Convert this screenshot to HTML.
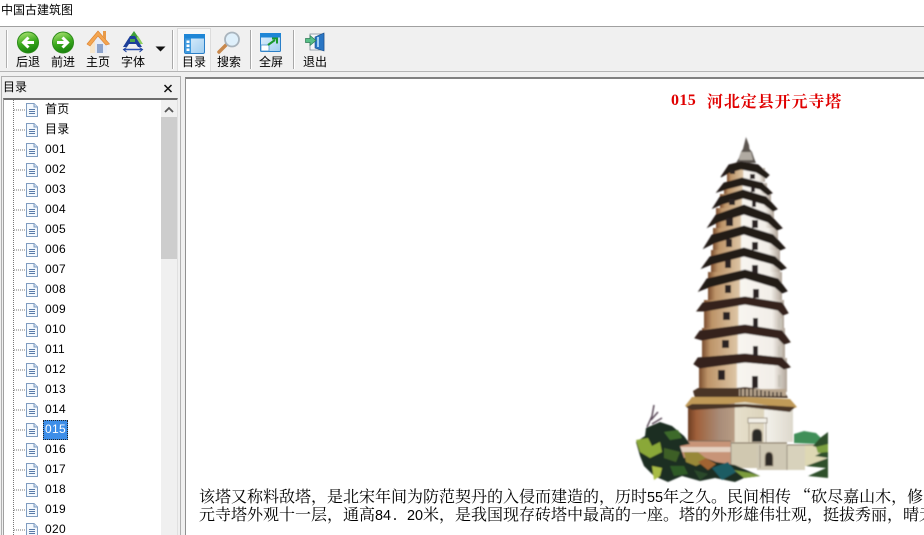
<!DOCTYPE html>
<html><head><meta charset="utf-8">
<style>
html,body{margin:0;padding:0;width:924px;height:535px;overflow:hidden;background:#f0f0f0}
body{position:relative;font-family:"Liberation Sans","Noto Sans CJK SC",sans-serif;font-size:12px;color:#000}
div{position:absolute;white-space:nowrap}
.lb{top:55px;width:40px;text-align:center;line-height:14px;font-size:12px}
.sep{top:30px;width:1px;height:39px;background:#a8a8a8;border-right:1px solid #fff}
.it{left:45px;line-height:16px;font-size:12px;letter-spacing:.3px}
.body{left:199px;font-family:"Noto Serif CJK SC",serif;font-size:16px;line-height:18px;color:#000}
.body i{font-style:normal;font-family:"Liberation Sans",sans-serif;font-size:14.4px}
.body b{font-weight:normal;font-family:"Liberation Mono",monospace;font-size:13.33px}
svg{position:absolute;left:0;top:0}
</style></head><body>
<div style="left:0;top:0;width:924px;height:26px;background:#fff"></div>
<div style="left:1px;top:3px;line-height:14px">中国古建筑图</div>
<div style="left:0;top:26px;width:924px;height:1px;background:#a0a0a0"></div>
<div style="left:0;top:71px;width:924px;height:1px;background:#b4b4b4"></div>
<div style="left:177px;top:28px;width:34px;height:43px;background:#f8f8f8;border:1px solid #dcdcdc;border-bottom:0;box-sizing:border-box"></div>
<div style="left:6px;top:30px;width:1px;height:38px;background:#b0b0b0;border-right:1px solid #fff"></div>
<div class="sep" style="left:172px"></div>
<div class="sep" style="left:250px"></div>
<div class="sep" style="left:293px"></div>
<div class="lb" style="left:8px">后退</div>
<div class="lb" style="left:43px">前进</div>
<div class="lb" style="left:78px">主页</div>
<div class="lb" style="left:113px">字体</div>
<div class="lb" style="left:174px">目录</div>
<div class="lb" style="left:209px">搜索</div>
<div class="lb" style="left:251px">全屏</div>
<div class="lb" style="left:295px">退出</div>

<!-- left pane -->
<div style="left:1px;top:76px;width:180px;height:459px;border:1px solid #b0b0b0;border-bottom:0;box-sizing:border-box"></div>
<div style="left:3px;top:80px;line-height:14px">目录</div>
<div style="left:3px;top:98px;width:175px;height:437px;background:#fff;border-top:2px solid #6d6d6d;border-left:1px solid #a0a0a0;border-right:1px solid #e0e0e0;box-sizing:border-box"></div>
<div style="left:161px;top:100px;width:16px;height:435px;background:#f0f0f0"></div>
<div style="left:161px;top:117px;width:16px;height:142px;background:#cdcdcd"></div>
<div style="left:185px;top:77px;width:739px;height:458px;background:#fff;border-top:2px solid #808080;border-left:1px solid #909090;box-sizing:border-box"></div>

<div class="it" style="top:101px">首页</div><div class="it" style="top:121px">目录</div>
<div class="it" style="top:141px">001</div><div class="it" style="top:161px">002</div>
<div class="it" style="top:181px">003</div><div class="it" style="top:201px">004</div>
<div class="it" style="top:221px">005</div><div class="it" style="top:241px">006</div>
<div class="it" style="top:261px">007</div><div class="it" style="top:281px">008</div>
<div class="it" style="top:301px">009</div><div class="it" style="top:321px">010</div>
<div class="it" style="top:341px">011</div><div class="it" style="top:361px">012</div>
<div class="it" style="top:381px">013</div><div class="it" style="top:401px">014</div>
<div class="it" style="top:420px;left:43px;width:25px;height:20px;background:#3d8ee8;outline:1px dotted #222;outline-offset:-1px;color:#fff;text-indent:2px;line-height:19px">015</div>
<div class="it" style="top:441px">016</div><div class="it" style="top:461px">017</div>
<div class="it" style="top:481px">018</div><div class="it" style="top:501px">019</div>
<div class="it" style="top:521px">020</div>

<!-- content -->
<div style="left:671px;top:92px;width:30px;font-family:'Liberation Serif',serif;font-size:16px;font-weight:bold;color:#e00000;line-height:18px;letter-spacing:.4px">015</div>
<div style="left:707px;top:92px;font-family:'Noto Serif CJK SC',serif;font-size:16px;font-weight:bold;color:#e00000;line-height:18px;letter-spacing:.9px">河北定县开元寺塔</div>
<div class="body" style="top:487px">该塔又称料敌塔，是北宋年间为防范契丹的入侵而建造的，历时<i>55</i>年之久。民间相传 “砍尽嘉山木，修</div>
<div class="body" style="top:505px">元寺塔外观十一层，通高<i>84</i><b>. </b><i>20</i>米，是我国现存砖塔中最高的一座。塔的外形雄伟壮观，挺拔秀丽，晴天</div>

<svg width="924" height="535" viewBox="0 0 924 535">
<defs>
<linearGradient id="g1" x1=".3" y1="0" x2=".6" y2="1"><stop offset="0" stop-color="#a8e070"/><stop offset=".5" stop-color="#3cab1e"/><stop offset="1" stop-color="#17800c"/></linearGradient>
<linearGradient id="pw" x1="0" y1="0" x2="1" y2="0"><stop offset="0" stop-color="#7a4c2e"/><stop offset=".1" stop-color="#bd9468"/><stop offset=".42" stop-color="#dcc4a4"/><stop offset=".44" stop-color="#f8f5f0"/><stop offset=".85" stop-color="#f2eee8"/><stop offset="1" stop-color="#b0a498"/></linearGradient>
<linearGradient id="pb" x1="0" y1="0" x2="1" y2="0"><stop offset="0" stop-color="#6b3d22"/><stop offset=".08" stop-color="#a0603a"/><stop offset=".3" stop-color="#a88c78"/><stop offset=".44" stop-color="#b89c84"/><stop offset=".45" stop-color="#e6e0cc"/><stop offset=".72" stop-color="#ddd4bc"/><stop offset=".73" stop-color="#f4f2ec"/><stop offset="1" stop-color="#ddd8cc"/></linearGradient>
<linearGradient id="win" x1="0" y1="0" x2="1" y2="1"><stop offset="0" stop-color="#e4f2fd"/><stop offset="1" stop-color="#9fcdf0"/></linearGradient>
<symbol id="doc" viewBox="0 0 12 14"><path d="M.5.5H8L11.5 4V13.5H.5Z" fill="#f3f8fd" stroke="#7f9cc0"/><path d="M8 .5V4H11.5" fill="#cfe0f2" stroke="#7f9cc0"/><path d="M3 6.5H9M3 8.5H9M3 10.5H9" stroke="#587aa8"/></symbol>
<filter id="soft" x="-5%" y="-5%" width="110%" height="110%"><feGaussianBlur stdDeviation=".8"/></filter>
</defs>

<!-- close & scroll arrow -->
<path d="M164.5 85L171.5 92M171.5 85L164.5 92" stroke="#111" stroke-width="1.5"/>
<path d="M165 112L169 108L173 112" fill="none" stroke="#555" stroke-width="1.8"/>

<!-- tree dotted -->
<path d="M13.5 100V535" stroke="#777" stroke-dasharray="1 1" fill="none"/>
<path d="M14 110H26M14 130H26M14 150H26M14 170H26M14 190H26M14 210H26M14 230H26M14 250H26M14 270H26M14 290H26M14 310H26M14 330H26M14 350H26M14 370H26M14 390H26M14 410H26M14 430H26M14 450H26M14 470H26M14 490H26M14 510H26M14 530H26" stroke="#777" stroke-dasharray="1 1" fill="none"/>
<use href="#doc" x="26" y="103" width="12" height="14"/><use href="#doc" x="26" y="123" width="12" height="14"/>
<use href="#doc" x="26" y="143" width="12" height="14"/><use href="#doc" x="26" y="163" width="12" height="14"/>
<use href="#doc" x="26" y="183" width="12" height="14"/><use href="#doc" x="26" y="203" width="12" height="14"/>
<use href="#doc" x="26" y="223" width="12" height="14"/><use href="#doc" x="26" y="243" width="12" height="14"/>
<use href="#doc" x="26" y="263" width="12" height="14"/><use href="#doc" x="26" y="283" width="12" height="14"/>
<use href="#doc" x="26" y="303" width="12" height="14"/><use href="#doc" x="26" y="323" width="12" height="14"/>
<use href="#doc" x="26" y="343" width="12" height="14"/><use href="#doc" x="26" y="363" width="12" height="14"/>
<use href="#doc" x="26" y="383" width="12" height="14"/><use href="#doc" x="26" y="403" width="12" height="14"/>
<use href="#doc" x="26" y="423" width="12" height="14"/><use href="#doc" x="26" y="443" width="12" height="14"/>
<use href="#doc" x="26" y="463" width="12" height="14"/><use href="#doc" x="26" y="483" width="12" height="14"/>
<use href="#doc" x="26" y="503" width="12" height="14"/><use href="#doc" x="26" y="523" width="12" height="14"/>

<!-- back -->
<circle cx="28" cy="42.5" r="10.5" fill="url(#g1)" stroke="#2a8a18"/>
<path d="M34 42.5H24M28.5 37.5L23.5 42.5L28.5 47.5" fill="none" stroke="#fff" stroke-width="3"/>
<!-- forward -->
<circle cx="63" cy="42.5" r="10.5" fill="url(#g1)" stroke="#2a8a18"/>
<path d="M57 42.5H67M62.5 37.5L67.5 42.5L62.5 47.5" fill="none" stroke="#fff" stroke-width="3"/>
<!-- home -->
<path d="M90 41L98 35L107 41V53H90Z" fill="#e6ebf5"/>
<path d="M90 41H95V53H90Z" fill="#f6e6cc"/>
<path d="M97 44H103V53H97Z" fill="#8ca3cb"/>
<path d="M87 44L98 31L109.5 44L106 45L98 36L90 46Z" fill="#f4a650" stroke="#dc8030" stroke-width=".6"/>
<path d="M103 31H106V40L103 36Z" fill="#e89a48"/>
<!-- font -->
<path d="M134 31L141 41H127Z" fill="#3f9f3a"/><path d="M138 36L143 44H133Z" fill="#8ccf5e"/>
<path d="M123 47L130 36H135L142 47H138L136 44H129L127 47Z" fill="#1c3f9a"/>
<rect x="130" y="39" width="5" height="3" fill="#4aa54a"/>
<path d="M124 49.5H142" stroke="#2b4fb0" stroke-width="1.6"/><path d="M126.5 47.5L123.5 49.5L126.5 52M139.5 47.5L142.5 49.5L139.5 52" fill="none" stroke="#1c3f9a"/>
<!-- dropdown -->
<path d="M155.5 46.5H165.5L160.5 51.5Z" fill="#111"/>
<!-- catalog -->
<rect x="184.5" y="34.5" width="20" height="19" rx="1.5" fill="url(#win)" stroke="#2a7fc8"/>
<rect x="184" y="34" width="21" height="4.5" fill="#1f86d6"/>
<path d="M185 38.5H191V53H185Z" fill="#3f9ade"/>
<path d="M186.5 40.5H189.5V43H186.5ZM186.5 44.5H189.5V47H186.5ZM186.5 48.5H189.5V51H186.5Z" fill="#fff"/>
<!-- search -->
<path d="M219 52L226 45" stroke="#c8884c" stroke-width="3.5" stroke-linecap="round"/>
<circle cx="232" cy="39.5" r="7" fill="#dff0fb" stroke="#a9b4bd" stroke-width="1.8"/>
<!-- fullscreen -->
<rect x="260.5" y="33.5" width="20" height="18" rx="1" fill="url(#win)" stroke="#2a7fc8"/>
<rect x="260" y="33" width="21" height="4.5" fill="#1f86d6"/>
<rect x="261" y="45" width="8" height="6" fill="#fff" stroke="#4a94cf" stroke-width=".8"/>
<path d="M268 45L275 40M272 38.5H277V43.5" fill="none" stroke="#1a9a2e" stroke-width="2"/>
<!-- exit -->
<path d="M310 34H324V50H310Z" fill="#f4f6f8" stroke="#7c8a98" stroke-width=".8"/>
<path d="M315 37L324 33V51L315 48Z" fill="#2a76c4" stroke="#174a86" stroke-width=".6"/>
<path d="M318 37V47" stroke="#a0cdf2" stroke-width="2"/>
<path d="M305.5 38.5H310V35.5L316 40.5L310 45.5V42.5H305.5Z" fill="#58bf86" stroke="#2c7a55" stroke-width=".7"/>

<!-- pagoda -->
<g filter="url(#soft)">
<!-- finial -->
<path d="M746 137L747.5 141L749 145L749.5 149L752 152L754 158L756 163H736L739 158L741 152L743 149L744 145Z" fill="#5b5450"/>
<path d="M741 152H751L753 160H739Z" fill="#b0aaa2"/>
<!-- walls -->
<path d="M727 168H765V182H727Z" fill="url(#pw)"/>
<path d="M724 183H767V194H724Z" fill="url(#pw)"/>
<path d="M720 194H771V210H720Z" fill="url(#pw)"/>
<path d="M716 208H774V230H716Z" fill="url(#pw)"/>
<path d="M713 228H778V252H713Z" fill="url(#pw)"/>
<path d="M711 250H780V274H711Z" fill="url(#pw)"/>
<path d="M708 272H782V300H708Z" fill="url(#pw)"/>
<path d="M704 300H784V328H704Z" fill="url(#pw)"/>
<path d="M702 328H785V358H702Z" fill="url(#pw)"/>
<path d="M699 358H787V392H699Z" fill="url(#pw)"/>
<path d="M688 402H793V442H688Z" fill="url(#pb)"/>
<!-- roofs -->
<path d="M721 177L729 165L741 162L758 165L769 175L766 178L756 172L741 169L730 172Z" fill="#241a18" stroke="#241a18"/>
<path d="M717 192L724 183L742 178L762 183L772 193L768 195L760 189L742 185L726 189Z" fill="#241a18" stroke="#241a18"/>
<path d="M713 208L720 197L743 190L766 197L777 209L773 211L764 204L743 198L722 204Z" fill="#241a18" stroke="#241a18"/>
<path d="M708 227L716 215L744 205L770 215L782 228L777 230L768 222L744 214L718 222Z" fill="#241a18" stroke="#241a18"/>
<path d="M704 248L712 235L744 226L773 235L785 248L780 250L771 243L744 234L714 243Z" fill="#241a18" stroke="#241a18"/>
<path d="M702 268L710 257L744 248L775 257L786 268L781 270L773 264L744 256L712 264Z" fill="#241a18" stroke="#241a18"/>
<path d="M699 291L707 279L745 270L778 279L787 291L782 293L775 287L745 278L709 287Z" fill="#241a18" stroke="#241a18"/>
<path d="M697 311L703 303L745 297L782 303L788 313L783 315L778 310L745 304L705 311Z" fill="#35241c" stroke="#35241c"/>
<path d="M695 338L700 331L745 325L782 331L790 342L784 344L778 338L745 333L702 340Z" fill="#35241c" stroke="#35241c"/>
<path d="M694 364L698 358L745 354L782 358L790 367L784 369L778 365L745 362L700 368Z" fill="#35241c" stroke="#35241c"/>
<!-- balcony -->
<path d="M693 391L698 388H736L745 387L785 392L788 398L745 397L695 398Z" fill="#4a3428"/>
<path d="M739 389H786V396H739Z" fill="#b8a58e"/>
<path d="M741 389V396M745 389V396M749 389V396M753 389V396M757 390V396M761 390V396M765 391V396M769 391V396M773 392V396M777 392V396M781 392V396" stroke="#332822" stroke-width="1.4"/>
<path d="M685 406L692 397H745L790 399L797 407L792 409L745 402L690 408Z" fill="#c09a58"/>
<path d="M686 407L692 404H745L795 407L790 412L745 407L692 410Z" fill="#4a3428"/>
<!-- windows -->
<path d="M730 170h5v4h-5ZM750 174h5v5h-5ZM751 187h4v5h-4ZM729 199h6v6h-6ZM752 201h4v6h-4ZM726 218h7v8h-7ZM752 220h6v8h-6ZM726 239h6v8h-6ZM752 242h6v8h-6ZM725 260h6v8h-6ZM752 265h6v8h-6ZM725 285h6v8h-6ZM753 289h6v9h-6ZM723 312h7v8h-7ZM753 318h5v10h-5ZM722 340h7v8h-7ZM753 346h5v10h-5ZM718 370h7v10h-7ZM752 376h6v12h-6Z" fill="#2a2420"/>
<path d="M778 318h4v10h-4ZM778 346h4v10h-4ZM778 375h4v12h-4Z" fill="#c8c2b8"/>
<!-- gate -->
<rect x="748" y="418" width="19" height="5" fill="#f2efe6" stroke="#8e8272" stroke-width=".8"/>
<path d="M749 423V442M766 423V442" stroke="#b0a48f"/>
<path d="M752 442V435q0-6 5-6t5 6v7Z" fill="#2a2a28" stroke="#8e8272" stroke-width=".8"/>
<!-- base wall -->
<path d="M675 441H731V470H675Z" fill="#c89478"/>
<path d="M680 447H731V452H680Z" fill="#e4d2c2"/>
<path d="M731 442H770V468H731Z" fill="#d0c8b0"/>
<path d="M757 442H787V470H757Z" fill="#cfc8b4"/>
<path d="M787 445H805V470H787Z" fill="#d8d2bc"/>
<path d="M805 445H826V466H805Z" fill="#ded8b4"/>
<path d="M672 441H731M731 443H787M787 445H825" stroke="#7a6a58" fill="none"/>
<path d="M731 442V468M760 445V468M787 445V470" stroke="#9a9080" fill="none"/>
<path d="M765 466V458q0-6 4-6t4 6v8Z" fill="#2e2a26" stroke="#9a8e7a" stroke-width=".8"/>
<!-- right foliage -->
<path d="M794 443L794 434L804 431L816 433L823 440L818 444Z" fill="#3f8f58"/>
<path d="M828 432L820 438L813 446L826 450L815 456L828 458L806 466L826 468L808 476L828 478Z" fill="#2f4f2c"/>
<path d="M816 447L828 444V452L818 453Z" fill="#7ca040"/>
<!-- left foliage -->
<path d="M647 427L652 416L654 405M651 420L658 412M652 424L662 418M655 426L664 424" fill="none" stroke="#5a4a58" stroke-width="1.5"/>
<path d="M646 428L660 422L672 426L684 436L690 444L680 446L684 458L700 456L716 462L735 465L760 476L744 478L735 482L715 478L700 481L682 476L668 482L654 476L644 466L640 456L636 442L645 436Z" fill="#1d2d22"/>
<path d="M636 440L648 438L652 446L660 442L662 452L650 458L640 452Z" fill="#8aa838"/>
<path d="M652 466L662 468L660 476L654 480Z" fill="#a8bc44"/>
<path d="M664 432L678 430L682 438L670 440Z" fill="#3c6a2c"/>
<path d="M664 448L680 452L676 462L664 458Z" fill="#3e5e28"/>
<path d="M684 452L698 452L708 460L696 466L686 462Z" fill="#988838"/>
<path d="M698 462L706 458L716 464L708 470Z" fill="#a06430"/>
<path d="M670 466L684 466L688 474L674 476Z" fill="#2e5a28"/>
<path d="M712 468L728 462L736 472L722 480Z" fill="#1c5c64"/>
<path d="M734 470L750 473L760 476L744 478Z" fill="#7c9c3c"/>
<path d="M694 470L708 474L700 480Z" fill="#2c4a2c"/>
</g>
</svg>
</body></html>
